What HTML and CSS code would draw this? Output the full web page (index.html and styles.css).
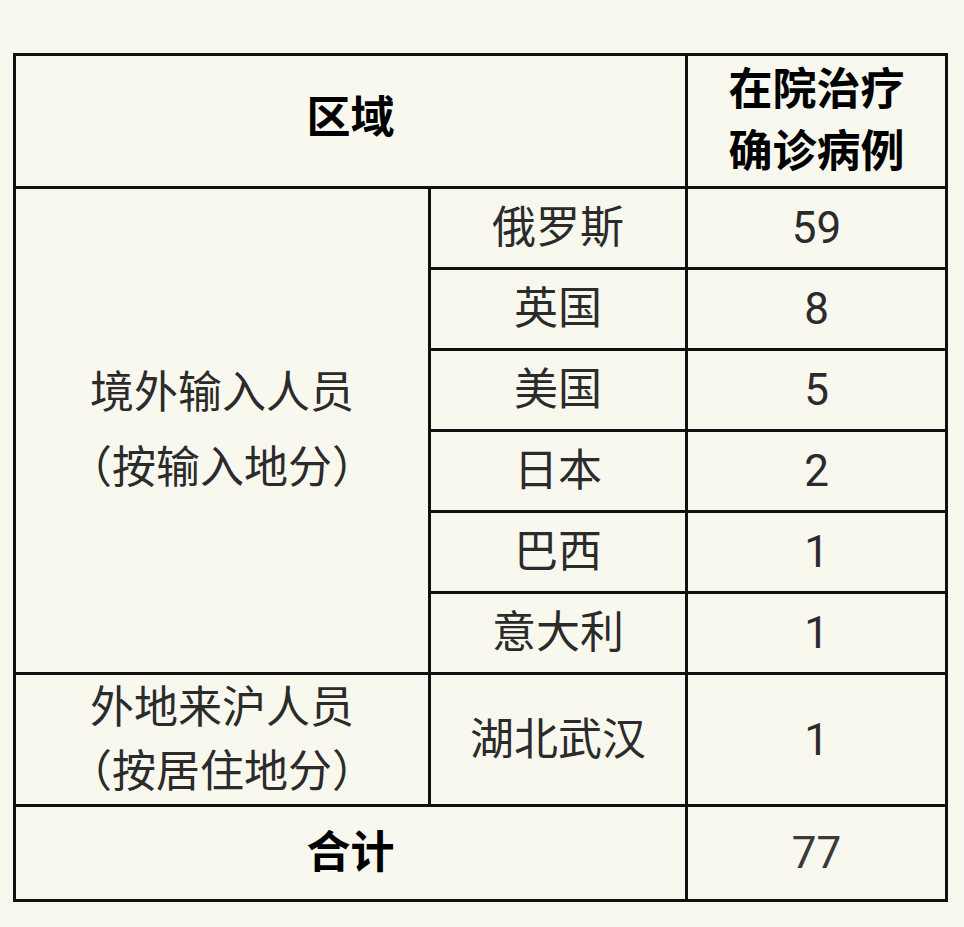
FILE: index.html
```html
<!DOCTYPE html>
<html lang="zh-CN">
<head>
<meta charset="utf-8">
<title>在院治疗确诊病例</title>
<link rel="stylesheet" href="styles.css">
</head>
<body>
<table class="stats">
  <colgroup>
    <col class="col-group">
    <col class="col-place">
    <col class="col-num">
  </colgroup>
  <tr class="row-head">
    <th colspan="2" class="head-region">区域</th>
    <th><span class="hline">在院治疗</span><span class="hline">确诊病例</span></th>
  </tr>
  <tr class="row-item">
    <td rowspan="6" class="group-abroad"><span class="gline">境外输入人员</span><span class="gline"><span class="paren">（</span>按输入地分<span class="paren">）</span></span></td>
    <td class="place">俄罗斯</td>
    <td>59</td>
  </tr>
  <tr class="row-item"><td class="place">英国</td><td>8</td></tr>
  <tr class="row-item"><td class="place">美国</td><td>5</td></tr>
  <tr class="row-item"><td class="place">日本</td><td>2</td></tr>
  <tr class="row-item"><td class="place">巴西</td><td>1</td></tr>
  <tr class="row-item"><td class="place">意大利</td><td>1</td></tr>
  <tr class="row-domestic">
    <td class="group-domestic"><span class="gline">外地来沪人员</span><span class="gline"><span class="paren">（</span>按居住地分<span class="paren">）</span></span></td>
    <td class="place">湖北武汉</td>
    <td>1</td>
  </tr>
  <tr class="row-total">
    <th colspan="2" class="head-total">合计</th>
    <td class="total-num">77</td>
  </tr>
</table>
</body>
</html>
```

FILE: styles.css
```css
html, body {
  margin: 0;
  padding: 0;
  background: #f9f8ef;
}

body {
  padding: 53px 0 0 13px;
  font-family: Roboto, "Noto Sans CJK SC", sans-serif;
  color: #2b2b2b;
}

.stats {
  border-collapse: separate;
  border-spacing: 0;
  border-top: 3px solid #111;
  border-left: 3px solid #111;
  width: 935px;
  table-layout: fixed;
  font-size: 44px;
}

.col-group { width: 415px; }
.col-place { width: 257px; }
.col-num { width: 260px; }

.stats th,
.stats td {
  box-sizing: border-box;
  border-right: 3px solid #111;
  border-bottom: 3px solid #111;
  padding: 0;
  text-align: center;
  vertical-align: middle;
  font-weight: 400;
}

.stats th {
  font-weight: 700;
  color: #000;
}

.row-head th { height: 133px; }
.row-item td { height: 81px; }
.row-domestic td { height: 132px; }
.row-total th,
.row-total td { height: 95px; }

.stats .place { padding-bottom: 8px; }
.stats .head-region { padding-bottom: 14px; }
.stats .head-total { padding-bottom: 8px; }

.hline {
  display: block;
  line-height: 62px;
}

.gline {
  display: block;
}

.group-abroad .gline { line-height: 75px; }
.group-domestic .gline { line-height: 64px; }

.paren {
  font-feature-settings: "halt";
}

.total-num { color: #3a3a3a; }
```
